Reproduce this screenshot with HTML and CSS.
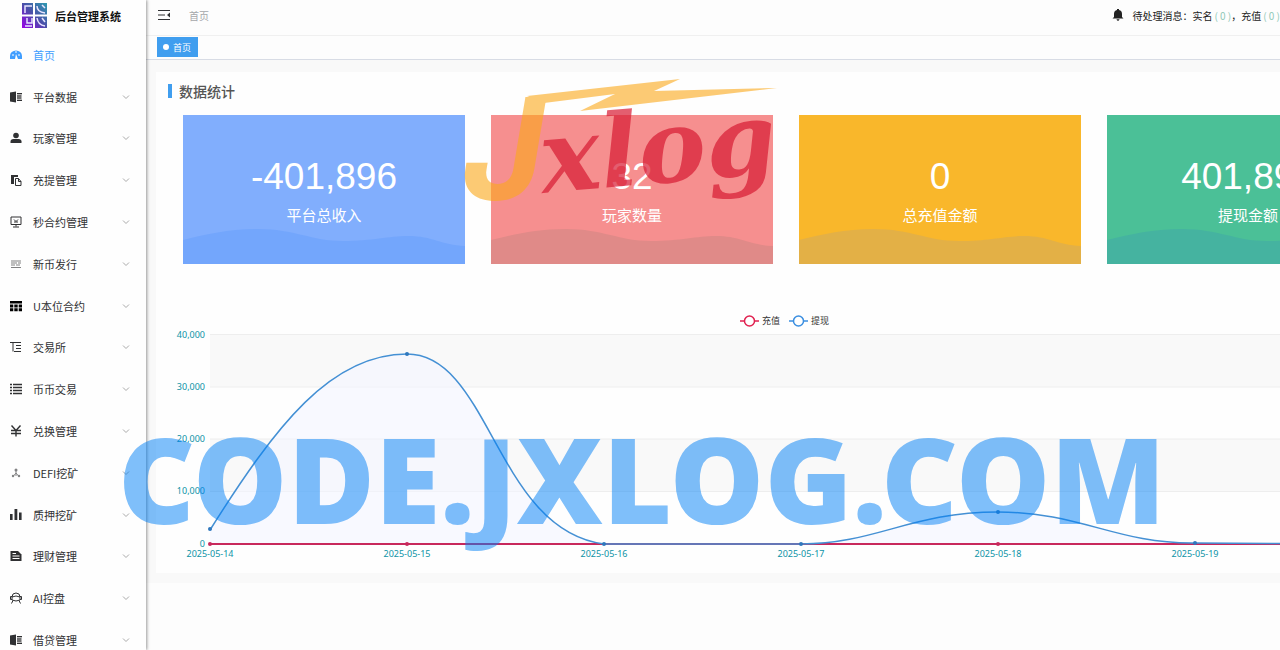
FILE: index.html
```
<!DOCTYPE html>
<html lang="zh-CN">
<head>
 <meta charset="UTF-8">
 <meta name="viewport" content="width=device-width, initial-scale=1.0">
 <title>后台管理系统</title>
 <link rel="stylesheet" href="styles.css">
</head>
<body>
 <svg class="defs" width="0" height="0" aria-hidden="true">
  <symbol id="arrow" viewBox="0 0 8 8"><path d="M1 2.5 4 5.5 7 2.5" fill="none" stroke="currentColor"/></symbol>
  <symbol id="book" viewBox="0 0 12 12"><path d="M0 1.5 6 .5v11L0 10.500z"/><path d="M7 2h5v8H7z" opacity=".35"/><path d="M7 2.500h5M7 5h4M7 7h4M7 9.500h5" stroke="currentColor"/></symbol>
  <symbol id="wave" viewBox="0 0 282 36"><path d="M0 12C25 6 45 1 75 1 112 1 128 13 160 13 190 13 205 8 225 8 250 8 258 17 282 18V36H0z"/></symbol>
 </svg>

 <div class="app">
  <aside class="sidebar">
   <div class="logo">
    <svg viewBox="0 0 25 25" width="25" height="25" aria-hidden="true">
     <defs><linearGradient id="lg" x1="0" y1="1" x2="1" y2="0"><stop offset="0" stop-color="#9a00e8"/><stop offset=".5" stop-color="#4a4fa8"/><stop offset="1" stop-color="#2f9bb0"/></linearGradient></defs>
     <path d="M0 0h25v25H0z" fill="url(#lg)"/>
     <path d="M12 0v25M0 12.500h25" stroke="#fff" stroke-width="2"/>
     <path d="M3 10V3h7M5 15v5h5v-5M3 23h7M15 3q0 6 8 7M20 2l3 3M15 15q1 7 8 8M20 15l3 4" fill="none" stroke="#e8e4ff" stroke-width="1.500"/>
    </svg>
    <strong>后台管理系统</strong>
   </div>
   <nav>
    <ul class="menu">
     <li><a class="active" href="#"><svg class="icon" viewBox="0 0 12 12"><path d="M0 10V7a6 5.500 0 0 1 12 0v3H8L6 5 5 10z"/><path d="M2 6h2M8 6h2M6 2v2" stroke="#fff"/></svg><span>首页</span></a></li>
     <li><a href="#"><svg class="icon"><use href="#book"/></svg><span>平台数据</span><svg class="arrow"><use href="#arrow"/></svg></a></li>
     <li><a href="#"><svg class="icon" viewBox="0 0 12 12"><circle cx="6" cy="3.500" r="2.800"/><path d="M.5 11V9.500q0-2.500 3-2.500h5q3 0 3 2.500V11z"/></svg><span>玩家管理</span><svg class="arrow"><use href="#arrow"/></svg></a></li>
     <li><a href="#"><svg class="icon" viewBox="0 0 12 12"><path d="M1 1h7v2H4v7H1z"/><path d="M5.500 4.500h3l2.500 3v4H5.500zM8.500 4.500v3H11" fill="none" stroke="currentColor"/></svg><span>充提管理</span><svg class="arrow"><use href="#arrow"/></svg></a></li>
     <li><a href="#"><svg class="icon" viewBox="0 0 12 12"><path d="M1 1h10v7.500H1zM6 8.500v2M3 11h6M4 3.500l2 2 2-2M4 6h4" fill="none" stroke="currentColor"/></svg><span>秒合约管理</span><svg class="arrow"><use href="#arrow"/></svg></a></li>
     <li><a href="#"><svg class="icon pale" viewBox="0 0 12 12"><path d="M1 3h10M1 5h6M8 5h3M1 7h4M6 7h4M1 9.500h10" fill="none" stroke="currentColor"/></svg><span>新币发行</span><svg class="arrow"><use href="#arrow"/></svg></a></li>
     <li><a href="#"><svg class="icon dark" viewBox="0 0 12 12"><path d="M0 1h12v2.500H0zM0 4.500h3.300v3H0zM4.300 4.500h3.400v3H4.300zM8.700 4.500H12v3H8.700zM0 8.300h3.300v3H0zM4.300 8.300h3.400v3H4.300zM8.700 8.300H12v3H8.700z"/></svg><span>U本位合约</span><svg class="arrow"><use href="#arrow"/></svg></a></li>
     <li><a href="#"><svg class="icon" viewBox="0 0 12 12"><path d="M0 1.500h11M3 1.500v9M6 4.500h5M6 7.500h5M4 10.500h7" fill="none" stroke="currentColor"/></svg><span>交易所</span><svg class="arrow"><use href="#arrow"/></svg></a></li>
     <li><a href="#"><svg class="icon" viewBox="0 0 12 12"><path d="M0 1.500h2M3 1.500h9M0 4.500h2M3 4.500h9M0 7.500h2M3 7.500h9M0 10.500h2M3 10.500h9" fill="none" stroke="currentColor" stroke-width="1.400"/></svg><span>币币交易</span><svg class="arrow"><use href="#arrow"/></svg></a></li>
     <li><a href="#"><svg class="icon" viewBox="0 0 12 12"><path d="M1.500.5 6 5.500l4.500-5M6 5.500v6M1 5.500h10M1 8.500h10" fill="none" stroke="currentColor" stroke-width="1.400"/></svg><span>兑换管理</span><svg class="arrow"><use href="#arrow"/></svg></a></li>
     <li><a href="#"><svg class="icon pale" viewBox="0 0 12 12"><path d="M6 4v2L3.500 9M6 6l2.500 3M6 6v3" fill="none" stroke="currentColor"/><circle cx="6" cy="3" r="1.500"/><circle cx="3" cy="9" r="1.200"/><circle cx="9" cy="9" r="1.200"/></svg><span>DEFI挖矿</span><svg class="arrow"><use href="#arrow"/></svg></a></li>
     <li><a href="#"><svg class="icon" viewBox="0 0 12 12"><path d="M0 5h2.600v6H0zM4.500 0h2.800v11H4.500zM9 3.500h2.600V11H9z"/></svg><span>质押挖矿</span><svg class="arrow"><use href="#arrow"/></svg></a></li>
     <li><a href="#"><svg class="icon" viewBox="0 0 12 12"><path d="M.5 1H8l3.500 3.500V11H.5z"/><path d="M2.500 3.500H6M2.500 6h7M2.500 8.500h7" stroke="#fff"/></svg><span>理财管理</span><svg class="arrow"><use href="#arrow"/></svg></a></li>
     <li><a href="#"><svg class="icon" viewBox="0 0 12 12"><path d="M2 5a4 4 0 0 1 8 0v3q-4 2-8 0zM2 4.500H.5v3H2M10 4.500h1.500v3H10M3 8.500 1.500 11.500M9 8.500l1.500 3M2 5q4-2 8 0" fill="none" stroke="currentColor"/></svg><span>AI控盘</span><svg class="arrow"><use href="#arrow"/></svg></a></li>
     <li><a href="#"><svg class="icon"><use href="#book"/></svg><span>借贷管理</span><svg class="arrow"><use href="#arrow"/></svg></a></li>
    </ul>
   </nav>
  </aside>

  <div class="main">
   <div class="main-inner">
    <header class="navbar">
     <button class="fold" aria-label="收起菜单"><svg viewBox="0 0 12 12" width="12" height="12"><path d="M0 1.500h12M0 6h7M0 10.500h12" stroke="currentColor" stroke-width="1.200"/><path d="M12 3.500v5L9 6z"/></svg></button>
     <span class="crumb">首页</span>
     <div class="notice">
      <svg viewBox="0 0 12 12" width="12" height="12"><path d="M5 0h2v1q3 .6 3 4v3l1.500 1.500H.5L2 8V5q0-3.400 3-4zM4.500 10.300h3q-.4 1.500-1.500 1.500t-1.500-1.500z"/></svg>
      <span>待处理消息：实名<a href="#">( 0 )</a>，充值<a href="#">( 0 )</a></span>
     </div>
    </header>
    <div class="tabs"><button class="tab">首页</button></div>

    <main class="content">
     <section class="panel">
      <h3>数据统计</h3>
      <div class="cards">
       <div class="card blue"><b>-401,896</b><span>平台总收入</span><svg class="wave" viewBox="0 0 282 36" preserveAspectRatio="none"><use href="#wave"/></svg></div>
       <div class="card red"><b>32</b><span>玩家数量</span><svg class="wave" viewBox="0 0 282 36" preserveAspectRatio="none"><use href="#wave"/></svg></div>
       <div class="card yellow"><b>0</b><span>总充值金额</span><svg class="wave" viewBox="0 0 282 36" preserveAspectRatio="none"><use href="#wave"/></svg></div>
       <div class="card green"><b>401,896</b><span>提现金额</span><svg class="wave" viewBox="0 0 282 36" preserveAspectRatio="none"><use href="#wave"/></svg></div>
      </div>
      <svg class="chart" viewBox="0 0 1260 265" role="img" aria-label="充值与提现">
       <!-- 分隔区域 -->
       <path d="M54 35h1182v52H54zM54 139h1182v52H54z" fill="#f9f9f9"/>
       <path d="M54 34.500h1182M54 87h1182M54 139h1182M54 191.500h1182" stroke="#eeeeee"/>
       <!-- 图例 -->
       <g fill="#fff" stroke-width="1.500">
        <g stroke="#e0204f"><path d="M584 21h19"/><circle cx="593.500" cy="21" r="5"/></g>
        <g stroke="#3a8ee0"><path d="M633 21h19"/><circle cx="642.500" cy="21" r="5"/></g>
       </g>
       <g class="legend"><text x="606" y="24">充值</text><text x="655" y="24">提现</text></g>
       <!-- 坐标轴 -->
       <g class="axis y">
        <text x="49" y="38">40,000</text><text x="49" y="90">30,000</text><text x="49" y="142">20,000</text><text x="49" y="194">10,000</text><text x="49" y="247">0</text>
       </g>
       <g class="axis x">
        <text x="54" y="257">2025-05-14</text><text x="251" y="257">2025-05-15</text><text x="448" y="257">2025-05-16</text><text x="645" y="257">2025-05-17</text><text x="842" y="257">2025-05-18</text><text x="1039" y="257">2025-05-19</text><text x="1236" y="257">2025-05-20</text>
       </g>
       <!-- 曲线 -->
       <path d="M54 230C120 125 175 54 251 54 334 54 340 230 448 244H645C720 244 755 212 842 212 925 212 960 244 1039 243L1236 244H54z" fill="#f4f5ff" opacity=".6"/>
       <path d="M54 244H1236" stroke="#c8285c" stroke-width="2"/>
       <path d="M54 230C120 125 175 54 251 54 334 54 340 230 448 244H645C720 244 755 212 842 212 925 212 960 244 1039 243L1236 244" fill="none" stroke="#4490d4" stroke-width="1.500"/>
       <g fill="#c8285c"><circle cx="54" cy="244" r="2"/><circle cx="251" cy="244" r="2"/><circle cx="842" cy="244" r="2"/></g>
       <g fill="#2f78bd"><circle cx="54" cy="229" r="2"/><circle cx="251" cy="54" r="2"/><circle cx="448" cy="244" r="2"/><circle cx="645" cy="244" r="2"/><circle cx="842" cy="212" r="2"/><circle cx="1039" cy="243" r="2"/></g>
      </svg>
     </section>
    </main>
   </div>
  </div>

  <div class="mark">CODE.JXLOG.COM</div>
  <svg class="brand" viewBox="0 0 330 130" width="330" height="130">
   <g class="brand-j" opacity=".6">
    <text x="4" y="124">J</text>
    <path d="M69 20 222 3 196 15 319 12 122 35 157 18 86 27z"/>
   </g>
   <text class="brand-rest" x="85" y="117" transform="rotate(-5 85 117)">xlog</text>
  </svg>
 </div>
</body>
</html>
```
FILE: styles.css
```
* {
 box-sizing: border-box;
}

body {
 margin: 0;
 font-family: "Noto Sans CJK SC", sans-serif;
 font-size: 11px;
 color: #303133;
 background: #fdfdfd;
}

a {
 color: inherit;
 text-decoration: none;
}

button {
 border: 0;
 padding: 0;
 font: inherit;
 cursor: pointer;
}

svg {
 fill: currentColor;
}

.defs {
 position: absolute;
}

.app {
 position: relative;
 display: flex;
 height: 100vh;
 overflow: hidden;
}

/* 侧边栏 */
.sidebar {
 flex: none;
 width: 146px;
 background: #fefefe;
 box-shadow: 1px 0 3px rgba(0, 0, 0, 0.4);
 z-index: 1;
}

.logo {
 display: flex;
 align-items: center;
 gap: 8px;
 height: 34px;
 padding: 0 0 3px 22px;
 color: #111;
}

.menu {
 display: grid;
 grid-auto-rows: 1fr;
 min-height: 627px;
 margin: 0;
 padding: 0;
 list-style: none;
}

.menu a {
 display: flex;
 align-items: center;
 height: 100%;
 padding: 0 16px 0 10px;
}

.menu .active {
 color: #409eff;
}

.icon {
 width: 12px;
 height: 12px;
 margin-right: 11px;
}

.pale {
 opacity: 0.6;
}

.dark {
 color: #000;
}

.arrow {
 width: 8px;
 height: 8px;
 margin-left: auto;
 color: #aaa;
}

/* 主区域 */
.main {
 flex: 1;
 min-width: 0;
 overflow: hidden;
}

.main-inner {
 min-width: 1278px;
}

.navbar {
 display: flex;
 align-items: center;
 height: 36px;
 padding: 0 144px 5px 12px;
 border-bottom: 1px solid #f0f0f0;
}

.fold {
 display: flex;
 margin-right: 19px;
 background: none;
 color: #303133;
}

.crumb {
 font-size: 10px;
 color: #a5a7aa;
}

.notice {
 display: flex;
 align-items: center;
 gap: 8px;
 margin-left: auto;
 font-size: 10px;
 color: #222;
}

.notice a {
 margin-left: 2px;
 color: #8fc9b8;
}

.tabs {
 display: flex;
 align-items: center;
 height: 24px;
 padding: 0 0 1px 11px;
 border-bottom: 1px solid #d8dce5;
}

.tab {
 display: flex;
 align-items: center;
 gap: 4px;
 height: 20px;
 padding: 0 7px 0 6px;
 font-size: 9px;
 color: #fff;
 background: #409eef;
}

.tab::before {
 content: "";
 width: 6px;
 height: 6px;
 border-radius: 50%;
 background: #fff;
}

.content {
 padding: 12px 8px 10px 10px;
 background: #f9f9f9;
}

.panel {
 padding: 11px 27px 8px;
 background: #fefefe;
}

.panel h3 {
 display: flex;
 align-items: center;
 gap: 7px;
 height: 15px;
 margin: 0 0 17px -15px;
 font-size: 14px;
 font-weight: 500;
 color: #555;
}

.panel h3::before {
 content: "";
 width: 4px;
 height: 14px;
 background: #409eef;
}

.cards {
 display: grid;
 grid-template-columns: repeat(4, 1fr);
 gap: 26px;
}

.card {
 position: relative;
 display: flex;
 flex-direction: column;
 align-items: center;
 height: 149px;
 padding-top: 41px;
 color: #fff;
}

.card b {
 font: 37px/42px "Liberation Sans", sans-serif;
}

.card span {
 margin-top: 6px;
 font-size: 15px;
 line-height: 22px;
}

.wave {
 position: absolute;
 left: 0;
 bottom: 0;
 width: 100%;
 height: 36px;
}

.blue {
 background: #81aefd;
}

.blue .wave {
 color: #73a6fc;
}

.red {
 background: #f68f8f;
}

.red .wave {
 color: #e08a88;
}

.yellow {
 background: #f9b72b;
}

.yellow .wave {
 color: #e3b046;
}

.green {
 background: #4bc097;
}

.green .wave {
 color: #45b3a0;
}

/* 图表 */
.chart {
 display: block;
 width: calc(100% + 54px);
 margin: 36px -27px 0;
}

.legend {
 font-size: 9px;
 fill: #333;
}

.axis {
 font-family: "Noto Sans", sans-serif;
 font-size: 9px;
 fill: #0d93a6;
}

.axis.y {
 text-anchor: end;
}

.axis.x {
 text-anchor: middle;
}

/* 水印 */
.mark {
 position: absolute;
 left: 118px;
 top: 396px;
 z-index: 2;
 font: 900 119px/165px "Noto Sans", sans-serif;
 color: rgba(0, 127, 245, 0.5);
 white-space: nowrap;
 pointer-events: none;
}

.brand {
 position: absolute;
 left: 458px;
 top: 76px;
 z-index: 2;
 pointer-events: none;
}

.brand-j {
 fill: #fba919;
 font: italic bold 142px Inter, sans-serif;
}

.brand-rest {
 fill: rgba(215, 25, 50, 0.7);
 font: italic bold 101px "DejaVu Serif", serif;
}
```
